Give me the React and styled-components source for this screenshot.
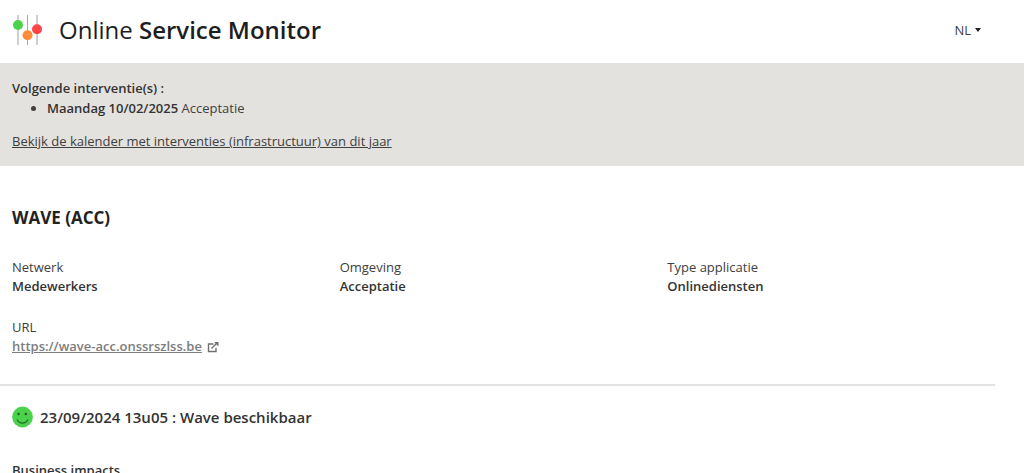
import React from "react";
import styled, { createGlobalStyle } from "styled-components";

const GlobalStyle = createGlobalStyle`
  *, *::before, *::after { box-sizing: border-box; }
  body {
    margin: 0;
    background: #fff;
    color: #404040;
    font: 13px/20px "Open Sans", "Noto Sans", sans-serif;
  }
  a { color: inherit; }
`;

const Header = styled.header`
  display: flex;
  align-items: center;
  gap: 16px;
  height: 63px;
  padding: 0 43px 3px 12px;
`;

const Brand = styled.h1`
  flex: 1;
  margin: 0;
  font-size: 24px;
  line-height: 36px;
  font-weight: 400;
  color: #1e1e1e;

  strong { font-weight: 600; }
`;

const LanguageButton = styled.button`
  display: flex;
  align-items: center;
  gap: 4px;
  padding: 0;
  border: 0;
  background: none;
  color: #404040;
  font: inherit;
  cursor: pointer;

  &::after {
    content: "";
    border: 3px solid transparent;
    border-top: 4px solid #222;
    border-bottom: 0;
  }
`;

const Banner = styled.section`
  padding: 15px 12px;
  background: #e4e2de;

  strong { font-weight: 600; color: #333; }
  p { margin: 0; }
`;

const InterventionList = styled.ul`
  margin: 0 0 13px;
  padding-left: 35px;
`;

const Main = styled.main`
  padding: 40px 29px 20px 0;
`;

const ServiceTitle = styled.h2`
  margin: 0 0 27px;
  padding-left: 12px;
  font-size: 17px;
  line-height: 24px;
  font-weight: 700;
  color: #222;
`;

const Details = styled.dl`
  display: grid;
  grid-template-columns: repeat(3, 1fr);
  row-gap: 21px;
  margin: 0;
  padding: 0 0 28px 12px;
  border-bottom: 2px solid #e2e2e2;
`;

const Detail = styled.div`
  dd {
    margin: 0;
    color: #333;
    font-weight: 600;
    line-height: 19px;
  }
`;

const ServiceLink = styled.a`
  display: inline-flex;
  align-items: center;
  gap: 5px;
  color: #7d7d7d;
  text-decoration: none;

  span { text-decoration: underline; }
`;

const Status = styled.h3`
  display: flex;
  align-items: center;
  gap: 7px;
  margin: 20px 0 32px;
  padding-left: 12px;
  font-size: 15px;
  line-height: 22px;
  font-weight: 600;
  color: #333;
`;

const Subheading = styled.h4`
  margin: 0;
  padding-left: 12px;
  font-size: 13px;
  line-height: 20px;
  font-weight: 600;
  color: #333;
`;

const Logo = () => (
  <svg width="31" height="30" viewBox="0 0 31 30" aria-hidden="true">
    <path d="M6 0v30M25 0v30" stroke="#d0d0d0" strokeWidth="2" />
    <path d="M15.5 0v30" stroke="#aaa" strokeWidth="1" />
    <circle cx="6" cy="10" r="5" fill="#4bd14b" />
    <circle cx="15.5" cy="20.3" r="5" fill="#ff8c3a" />
    <circle cx="25" cy="14.2" r="5" fill="#ff4545" />
  </svg>
);

const Smiley = () => (
  <svg width="21" height="22" viewBox="0 0 21 22" aria-hidden="true">
    <circle cx="10.5" cy="11" r="10.4" fill="#4bd14b" />
    <circle cx="6.500" cy="8" r="1.2" fill="#1d5b1d" />
    <circle cx="13.8" cy="8" r="1.2" fill="#1d5b1d" />
    <path d="M5 13.5q2 3.600 5.500 3.600t5.500-3.600" fill="none" stroke="#236b2a" strokeWidth="1.2" />
  </svg>
);

const ExternalIcon = () => (
  <svg width="12" height="12" viewBox="0 0 12 12" fill="none" aria-hidden="true">
    <path d="M6.5 3H1.500v7.500h7.500V7M4.500 7.500l5-5" stroke="#707070" strokeWidth="1.4" />
    <path d="M7 1H11.500V5.500z" fill="#707070" />
  </svg>
);

export default function App() {
  return (
    <>
      <GlobalStyle />
      <Header>
        <Logo />
        <Brand>Online <strong>Service Monitor</strong></Brand>
        <LanguageButton type="button" aria-haspopup="true">NL</LanguageButton>
      </Header>
      <Banner>
        <p><strong>Volgende interventie(s) :</strong></p>
        <InterventionList>
          <li><strong>Maandag 10/02/2025</strong> Acceptatie</li>
        </InterventionList>
        <p><a href="#kalender">Bekijk de kalender met interventies (infrastructuur) van dit jaar</a></p>
      </Banner>
      <Main>
        <ServiceTitle>WAVE (ACC)</ServiceTitle>
        <Details>
          <Detail><dt>Netwerk</dt><dd>Medewerkers</dd></Detail>
          <Detail><dt>Omgeving</dt><dd>Acceptatie</dd></Detail>
          <Detail><dt>Type applicatie</dt><dd>Onlinediensten</dd></Detail>
          <Detail>
            <dt>URL</dt>
            <dd>
              <ServiceLink href="#wave-acc">
                <span>https://wave-acc.onssrszlss.be</span>
                <ExternalIcon />
              </ServiceLink>
            </dd>
          </Detail>
        </Details>
        <Status><Smiley />23/09/2024 13u05 : Wave beschikbaar</Status>
        <Subheading>Business impacts</Subheading>
      </Main>
    </>
  );
}
